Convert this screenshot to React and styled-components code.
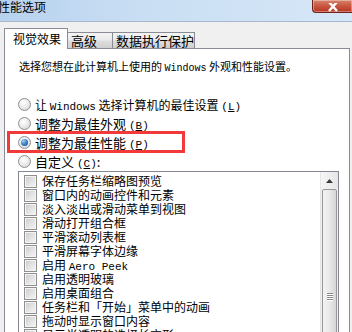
import styled, { createGlobalStyle } from "styled-components";

const Global = createGlobalStyle`
  html, body {
    margin: 0;
    padding: 0;
    overflow: hidden;
    background: #f0f0f0;
  }
  body {
    font-family: "Noto Sans CJK SC", "Noto Sans", sans-serif;
    color: #000;
  }
`;

const Window = styled.div`
  width: 352px;
  height: 332px;
  overflow: hidden;
  background: #f0f0f0;
  display: flex;
  flex-direction: column;
`;

const TitleBar = styled.div`
  height: 21px;
  flex: none;
  display: flex;
  justify-content: space-between;
  align-items: flex-start;
  background: linear-gradient(to right, #b7d2ef 0%, #c9def3 40%, #d6e7f7 100%);
  border-bottom: 1px solid #a7b8cc;
`;

const Title = styled.span`
  font-size: 12px;
  line-height: 14px;
  margin: 0 0 0 -2px;
`;

const CloseButton = styled.div`
  width: 39px;
  height: 12px;
  display: flex;
  justify-content: center;
  align-items: flex-end;
  background: linear-gradient(to bottom, #d8856f 0%, #c95a44 45%, #b8351f 100%);
  border: 1px solid #6e2519;
  border-top: none;
  border-right: none;
  border-bottom-left-radius: 4px;
  box-shadow: inset 0 0 0 1px rgba(255, 255, 255, 0.35);
`;

const Body = styled.div`
  flex: 1;
  padding: 6px 2px 0 4px;
  display: flex;
  flex-direction: column;
`;

const TabStrip = styled.div`
  height: 20px;
  flex: none;
  display: flex;
  align-items: flex-end;
`;

const Tab = styled.div`
  box-sizing: border-box;
  height: ${(p) => (p.$active ? "21px" : "16px")};
  width: ${(p) => p.$w}px;
  margin-bottom: ${(p) => (p.$active ? "-1px" : "0")};
  margin-left: ${(p) => (p.$active ? "0" : "-1px")};
  position: relative;
  z-index: ${(p) => (p.$active ? 2 : 1)};
  padding: ${(p) => (p.$active ? "0 0 0 8px" : "0 0 0 3px")};
  display: flex;
  align-items: center;
  font-size: ${(p) => (p.$active ? "12px" : "13px")};
  line-height: 14px;
  white-space: nowrap;
  border: 1px solid #898c95;
  border-bottom: none;
  background: ${(p) =>
    p.$active
      ? "#ffffff"
      : "linear-gradient(to bottom, #f4f4f4 0%, #ebebeb 45%, #dddddd 55%, #cfcfcf 100%)"};
`;

const Panel = styled.div`
  flex: 1;
  background: #ffffff;
  border: 1px solid #898c95;
  padding: 0 10px 0 13px;
  display: flex;
  flex-direction: column;
`;

const Latin = styled.span`
  font-family: "Liberation Mono", "DejaVu Sans Mono", monospace;
  font-size: ${(p) => (p.$big ? "11px" : "10px")};
  line-height: 1;
`;

const Description = styled.div`
  margin: 10px 0 0 1px;
  height: 14px;
  font-size: 11px;
  line-height: 14px;
  white-space: nowrap;
`;

const RadioGroup = styled.div`
  margin-top: 22px;
  display: flex;
  flex-direction: column;
`;

const RadioRow = styled.div`
  position: relative;
  height: 19px;
  display: flex;
  align-items: center;
  gap: 4px;
  font-size: ${(p) => (p.$small ? "12px" : "13px")};
  line-height: 16px;
  white-space: nowrap;
`;

const RadioDot = styled.span`
  box-sizing: border-box;
  width: 13px;
  height: 13px;
  border-radius: 50%;
  border: 1px solid #8e8f8f;
  background: radial-gradient(circle at 40% 35%, #ffffff 0%, #ececec 45%, #cfcfcf 100%);
  display: flex;
  align-items: center;
  justify-content: center;
  flex: none;

  &::after {
    content: "";
    display: ${(p) => (p.$checked ? "block" : "none")};
    width: 7px;
    height: 7px;
    border-radius: 50%;
    background: radial-gradient(circle at 35% 30%, #9fd2f8 0%, #3f86c8 45%, #15467d 100%);
  }
`;

const Highlight = styled.span`
  position: absolute;
  left: -11px;
  top: -2px;
  width: 178px;
  height: 22px;
  box-sizing: border-box;
  border: 3px solid #f23a3a;
  pointer-events: none;
`;

const ListBox = styled.div`
  height: 220px;
  flex: none;
  border: 1px solid #828790;
  display: flex;
  background: #ffffff;
`;

const Items = styled.div`
  flex: 1;
  padding: 2px 0 0 5px;
  display: flex;
  flex-direction: column;
`;

const Item = styled.div`
  height: 14px;
  display: flex;
  align-items: center;
  gap: 5px;
  font-size: 12px;
  line-height: 14px;
  white-space: nowrap;
`;

const CheckBox = styled.span`
  box-sizing: border-box;
  width: 13px;
  height: 13px;
  flex: none;
  border: 1px solid #8f8f8f;
  background: linear-gradient(135deg, #c9c9c9 0%, #e2e2e2 50%, #f6f6f6 100%);
  box-shadow: inset 0 0 0 1px #f4f4f4;
`;

const ScrollBar = styled.div`
  width: 17px;
  flex: none;
  display: flex;
  flex-direction: column;
  background: #f0f0f0;
  border-left: 1px solid #e6e6e6;
`;

const ArrowButton = styled.div`
  height: 17px;
  display: flex;
  align-items: center;
  justify-content: center;
  background: linear-gradient(to right, #f5f5f5, #e6e6e6);
`;

const Thumb = styled.div`
  flex: 1;
  margin: 0 1px;
  border: 1px solid #979797;
  border-radius: 2px;
  background: linear-gradient(to right, #f3f3f3 0%, #e9e9e9 50%, #d6d6d6 100%);
  display: flex;
  flex-direction: column;
  align-items: center;
  padding-top: 103px;
  gap: 1px;
`;

const Grip = styled.span`
  width: 6px;
  height: 1px;
  background: #8a8a8a;
  box-shadow: 0 1px 0 #ffffff;
`;

const Key = ({ k }) => (
  <Latin $big>
    (<u>{k}</u>)
  </Latin>
);

const items = [
  "保存任务栏缩略图预览",
  "窗口内的动画控件和元素",
  "淡入淡出或滑动菜单到视图",
  "滑动打开组合框",
  "平滑滚动列表框",
  "平滑屏幕字体边缘",
  <>
    启用 <Latin $big>Aero Peek</Latin>
  </>,
  "启用透明玻璃",
  "启用桌面组合",
  "任务栏和「开始」菜单中的动画",
  "拖动时显示窗口内容",
  "显示半透明的选择长方形",
  "显示缩略图，而不是显示图标",
];

export default function App() {
  return (
    <Window>
      <Global />
      <TitleBar>
        <Title>性能选项</Title>
        <CloseButton>
          <svg width="12" height="9" viewBox="0 0 12 9">
            <path d="M2 -1 L10 8 M10 -1 L2 8" stroke="#ffffff" strokeWidth="2.4" />
          </svg>
        </CloseButton>
      </TitleBar>
      <Body>
        <TabStrip>
          <Tab $active $w={64}>视觉效果</Tab>
          <Tab $w={46}>高级</Tab>
          <Tab $w={83}>数据执行保护</Tab>
        </TabStrip>
        <Panel>
          <Description>
            选择您想在此计算机上使用的 <Latin>Windows</Latin> 外观和性能设置。
          </Description>
          <RadioGroup>
            <RadioRow $small>
              <RadioDot />
              <span>
                让 <Latin $big>Windows</Latin> 选择计算机的最佳设置 <Key k="L" />
              </span>
            </RadioRow>
            <RadioRow>
              <RadioDot />
              <span>
                调整为最佳外观 <Key k="B" />
              </span>
            </RadioRow>
            <RadioRow>
              <RadioDot $checked />
              <span>
                调整为最佳性能 <Key k="P" />
              </span>
              <Highlight />
            </RadioRow>
            <RadioRow>
              <RadioDot />
              <span>
                自定义 <Key k="C" />:
              </span>
            </RadioRow>
          </RadioGroup>
          <ListBox>
            <Items>
              {items.map((t, i) => (
                <Item key={i}>
                  <CheckBox />
                  <span>{t}</span>
                </Item>
              ))}
            </Items>
            <ScrollBar>
              <ArrowButton>
                <svg width="7" height="4" viewBox="0 0 7 4">
                  <path d="M0 4 L3.5 0 L7 4 Z" fill="#3a3a3a" />
                </svg>
              </ArrowButton>
              <Thumb>
                <Grip />
                <Grip />
                <Grip />
                <Grip />
              </Thumb>
            </ScrollBar>
          </ListBox>
        </Panel>
      </Body>
    </Window>
  );
}
